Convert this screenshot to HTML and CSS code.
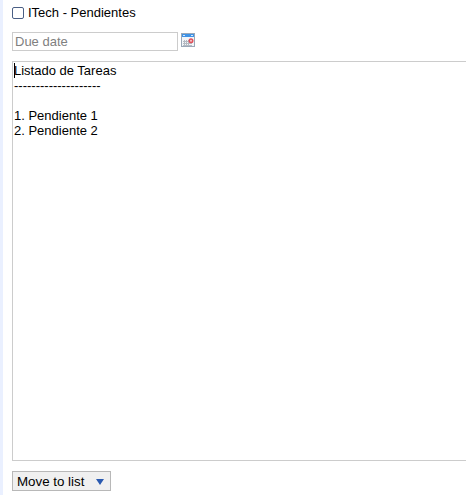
FILE: index.html
```html
<!DOCTYPE html>
<html lang="es">
  <head>
    <meta charset="UTF-8" />
    <title>ITech - Pendientes</title>
    <link rel="stylesheet" href="styles.css">
  </head>
  <body>
    <div class="task">
      <label class="task-title">
        <span class="check"></span>
        <span>ITech - Pendientes</span>
      </label>
      <div class="due">
        <input class="due-input" type="text" placeholder="Due date" />
        <svg class="due-icon" width="14" height="14" viewBox="0 0 14 14">
          <rect x="0.5" y="0.5" width="13" height="13" fill="#f2f5f8" stroke="#9aa8b8" />
          <rect x="1" y="1" width="12" height="3" fill="#3f93e6" />
          <rect x="2" y="2" width="2" height="1" fill="#d5e6fa" />
          <rect x="10" y="2" width="2" height="1" fill="#d5e6fa" />
          <path d="M2 8.5h7M2 10.5h9M2 12.5h9M3.5 7v6M5.5 7v6M7.5 7v6" stroke="#b4bac2" stroke-width="1" fill="none" />
          <circle cx="10" cy="7.7" r="2.5" fill="#e0505a" />
          <circle cx="10" cy="7.7" r="1" fill="#f6c9cc" />
        </svg>
      </div>
      <div class="notes-wrap">
        <textarea class="notes" spellcheck="false">Listado de Tareas
--------------------

1. Pendiente 1
2. Pendiente 2</textarea>
        <span class="caret"></span>
      </div>
      <button class="move" type="button">
        <span>Move to list</span>
        <span class="arrow"></span>
      </button>
    </div>
  </body>
</html>
```

FILE: styles.css
```css
* {
  margin: 0;
  padding: 0;
  box-sizing: border-box;
}
html,
body {
  height: 100%;
  overflow: hidden;
}
body {
  background-color: #fff;
  font-family: "Liberation Sans", Arial, sans-serif;
  font-size: 13px;
  color: #000;
}
.task {
  height: 495px;
  padding: 4px 0 0 9px;
  border-left: 3px solid #eaf0ff;
}
.task-title {
  display: flex;
  align-items: center;
  gap: 4px;
  height: 17px;
}
.check {
  width: 12px;
  height: 12px;
  margin-top: 1px;
  border: 1px solid #4a5f85;
  border-radius: 2px;
  background-color: #fff;
}
.due {
  display: flex;
  align-items: flex-start;
  gap: 3px;
  margin-top: 11px;
}
.due-input {
  width: 166px;
  height: 19px;
  padding: 0 2px;
  border: 1px solid #ccc;
  font-family: inherit;
  font-size: 13px;
  outline: none;
}
.due-input::placeholder {
  color: #808080;
}
.due-icon {
  margin-top: 1px;
}
.notes-wrap {
  position: relative;
  margin-top: 10px;
  width: 460px;
  height: 400px;
}
.notes {
  display: block;
  width: 100%;
  height: 100%;
  padding: 1px;
  border: 1px solid #ccc;
  font-family: inherit;
  font-size: 13px;
  line-height: 15px;
  resize: none;
  outline: none;
  overflow: hidden;
}
.caret {
  position: absolute;
  left: 2px;
  top: 2px;
  width: 1px;
  height: 15px;
  background-color: #000;
}
.move {
  display: flex;
  align-items: center;
  width: 99px;
  height: 20px;
  margin-top: 10px;
  padding: 0 4px;
  border: 1px solid #b8b8b8;
  background-color: #f0f0f0;
  font-family: inherit;
  font-size: 13.33px;
  color: #000;
}
.arrow {
  flex: none;
  width: 8px;
  height: 6px;
  margin-left: 12px;
  margin-top: 2px;
  border-left: 4px solid transparent;
  border-right: 4px solid transparent;
  border-top: 6px solid #2a5ab0;
}
```
